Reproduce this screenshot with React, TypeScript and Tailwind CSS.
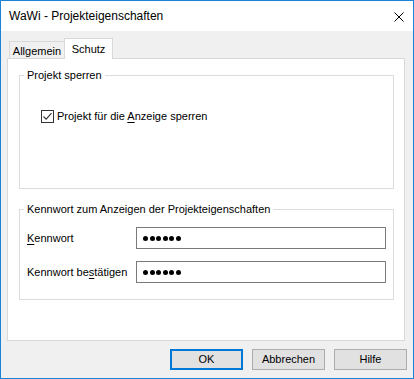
export default function App() {
  return (
    <div className="w-[414px] h-[379px] border border-[#1883D7] bg-[#F0F0F0] flex flex-col font-['Liberation_Sans',Arial,sans-serif] text-black text-[11px] leading-[15px] select-none">
      {/* Title bar */}
      <div className="h-[30px] bg-white flex items-center justify-between pl-[8px] pr-[9px]">
        <span className="text-[12px]">WaWi - Projekteigenschaften</span>
        <svg width="10" height="10" viewBox="0 0 10 10" className="mt-[1px]">
          <path d="M0.5 0.5L9.5 9.5M9.5 0.5L0.5 9.5" stroke="#000" strokeWidth="1" fill="none" />
        </svg>
      </div>

      {/* Tabs + panel */}
      <div className="ml-[6px] mr-[8px] mt-[7px] flex flex-col">
        <div className="relative z-10 -mb-px h-[21px] flex items-end pl-[2px]">
          <div className="w-[55px] h-[17px] mb-px border-l border-t border-[#D9D9D9] bg-[#F0F0F0] flex items-center justify-center pt-[2px]">
            Allgemein
          </div>
          <div className="w-[49px] h-[21px] border-l border-t border-r border-[#D9D9D9] bg-white flex items-start justify-center pt-[3px]">
            Schutz
          </div>
        </div>

        <div className="h-[283px] border border-[#D9D9D9] bg-white flex flex-col">
          {/* Projekt sperren */}
          <fieldset className="mt-[9px] ml-[11px] mr-[10px] h-[121px] border border-[#DCDCDC]">
            <legend className="ml-[4px] px-[3px]">Projekt sperren</legend>
            <label className="flex items-center pl-[21px] pt-[26px]">
              <span className="w-[13px] h-[13px] border border-[#333333] bg-white flex items-center justify-center">
                <svg width="11" height="11" viewBox="0 0 11 11">
                  <path d="M1.5 5.5L4.2 8.2L9.5 2.2" stroke="#333333" strokeWidth="1.1" fill="none" />
                </svg>
              </span>
              <span className="ml-[3px]">
                Projekt für die <span className="underline underline-offset-2">A</span>nzeige sperren
              </span>
            </label>
          </fieldset>

          {/* Kennwort */}
          <fieldset className="mt-[13px] ml-[11px] mr-[10px] h-[98px] border border-[#DCDCDC]">
            <legend className="ml-[4px] px-[3px]">Kennwort zum Anzeigen der Projekteigenschaften</legend>
            <div className="flex flex-col gap-[12px] pl-[7px] pt-[10px]">
              <div className="flex items-center">
                <span className="w-[109px]">
                  <span className="underline underline-offset-2">K</span>ennwort
                </span>
                <PasswordBox />
              </div>
              <div className="flex items-center">
                <span className="w-[109px]">
                  Kennwort be<span className="underline underline-offset-2">s</span>tätigen
                </span>
                <PasswordBox />
              </div>
            </div>
          </fieldset>
        </div>
      </div>

      {/* Buttons */}
      <div className="flex justify-end gap-[9px] pr-[6px] mt-[8px]">
        <button className="w-[73px] h-[21px] bg-[#E1E1E1] border-2 border-[#0078D7] flex items-center justify-center">
          OK
        </button>
        <button className="w-[73px] h-[21px] bg-[#E1E1E1] border border-[#ADADAD] flex items-center justify-center">
          Abbrechen
        </button>
        <button className="w-[73px] h-[21px] bg-[#E1E1E1] border border-[#ADADAD] flex items-center justify-center">
          Hilfe
        </button>
      </div>
    </div>
  )
}

function PasswordBox() {
  return (
    <div className="w-[250px] h-[22px] border border-[#7A7A7A] bg-white flex items-center pl-[6px] gap-[1.5px]">
      {[0, 1, 2, 3, 4, 5].map((i) => (
        <span key={i} className="w-[5px] h-[5px] rounded-full bg-black" />
      ))}
    </div>
  )
}
